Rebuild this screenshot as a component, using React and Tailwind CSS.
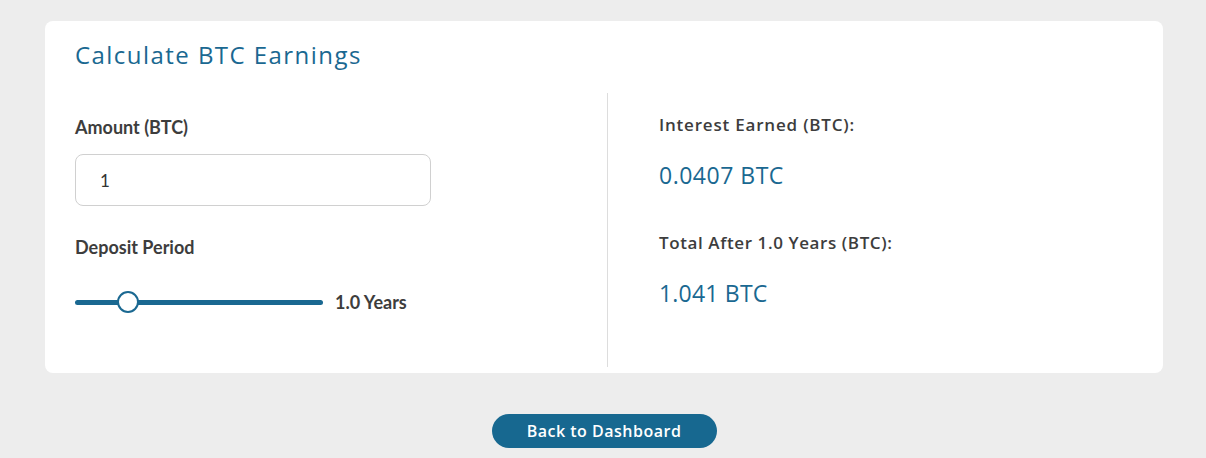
import React, { useState } from 'react';

export default function App() {
  const [amount, setAmount] = useState('1');
  const years = 1.0;
  const rate = 0.0407;
  const interest = (parseFloat(amount) || 0) * rate;
  const total = (parseFloat(amount) || 0) + interest;
  const pct = 21.4;

  return (
    <div className="min-h-[458px] bg-[#ededed] pl-[45px] pr-[43px] pt-[21px] pb-[10px] font-['Lato',sans-serif]">
      <div className="rounded-lg bg-white px-[30px] pt-[17px] pb-[6px]">
        <h2 className="font-['Open_Sans',sans-serif] text-[24px] leading-[34px] tracking-[1.45px] text-[#1a6891]">
          Calculate BTC Earnings
        </h2>
        <div className="mt-[21px] grid grid-cols-[533px_1fr]">
          <div className="border-r border-[#dddddd] pt-[22px] pb-[53px]">
            <label className="block text-[18px] leading-[24px] font-bold text-[#3d3d3d]">Amount (BTC)</label>
            <input
              value={amount}
              onChange={(e) => setAmount(e.target.value)}
              className="mt-[15px] h-[52px] w-[356px] rounded-lg border border-[#d0d0d0] px-[24px] text-[17px] text-[#333] outline-none"
            />
            <label className="mt-[29px] block text-[18px] leading-[24px] font-bold text-[#3d3d3d]">
              Deposit Period
            </label>
            <div className="mt-[31px] flex items-center gap-3">
              <div className="relative h-[5px] w-[248px] rounded-full bg-[#1a6891]">
                <div
                  className="absolute top-1/2 h-[22px] w-[22px] -translate-x-1/2 -translate-y-1/2 rounded-full border-2 border-[#1a6891] bg-white"
                  style={{ left: `${pct}%` }}
                />
              </div>
              <span className="text-[18px] leading-[24px] font-bold text-[#3d3d3d]">{years.toFixed(1)} Years</span>
            </div>
          </div>
          <div className="pl-[51px] pt-[20px]">
            <p className="font-['Open_Sans',sans-serif] text-[17px] leading-[24px] tracking-[0.8px] font-semibold text-[#3d3d3d]">
              Interest Earned (BTC):
            </p>
            <p className="mt-[23px] font-['Open_Sans',sans-serif] text-[23px] leading-[31px] tracking-[0.5px] text-[#1a6891]">
              {interest.toFixed(4)} BTC
            </p>
            <p className="mt-[40px] font-['Open_Sans',sans-serif] text-[17px] leading-[24px] tracking-[0.6px] font-semibold text-[#3d3d3d]">
              Total After {years.toFixed(1)} Years (BTC):
            </p>
            <p className="mt-[23px] font-['Open_Sans',sans-serif] text-[23px] leading-[31px] tracking-[0.2px] text-[#1a6891]">
              {total.toFixed(3)} BTC
            </p>
          </div>
        </div>
      </div>
      <div className="mt-[41px] flex justify-center">
        <button className="h-[34px] w-[225px] rounded-full bg-[#176890] font-['Open_Sans',sans-serif] text-[16px] tracking-[0.5px] font-semibold text-white">
          Back to Dashboard
        </button>
      </div>
    </div>
  );
}
